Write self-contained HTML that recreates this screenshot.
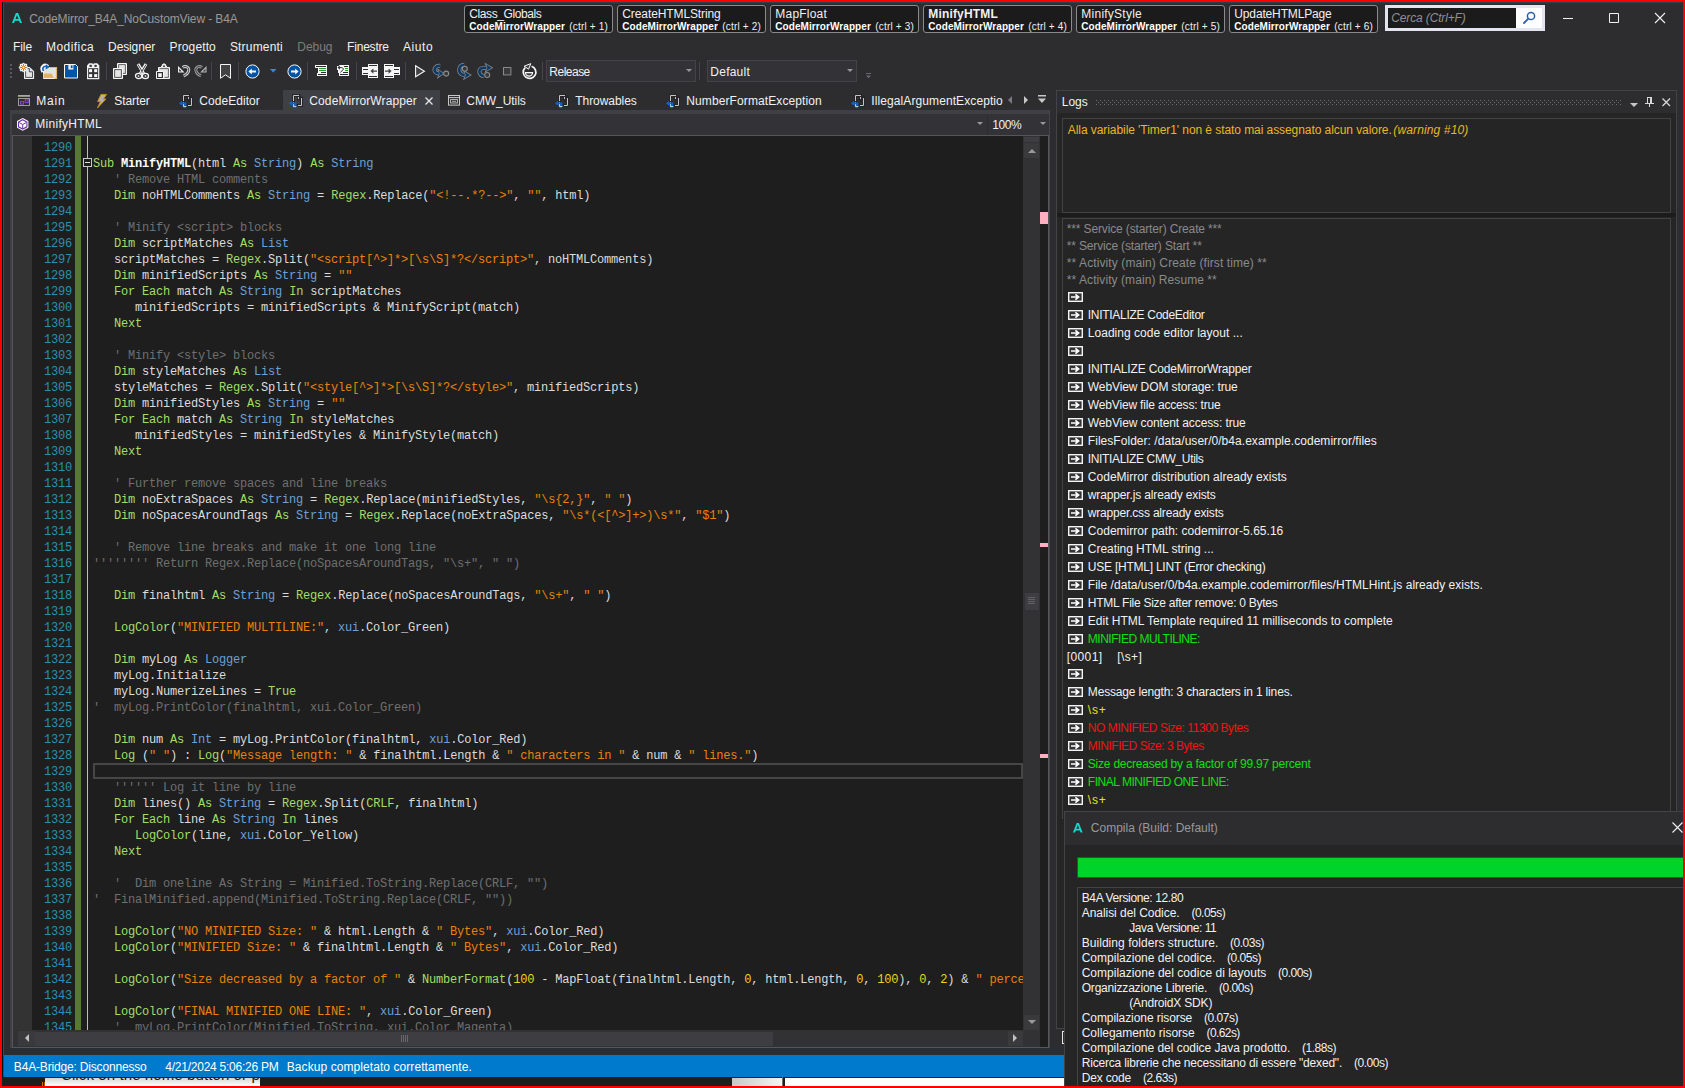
<!DOCTYPE html>
<html><head><meta charset="utf-8"><title>B4A</title>
<style>
html,body{margin:0;padding:0;}
body{width:1685px;height:1088px;background:#2d2d30;overflow:hidden;position:relative;font-family:'Liberation Sans', sans-serif;}
svg{position:absolute;overflow:visible}

.code{position:absolute;white-space:pre;font:12px/16px "Liberation Mono", monospace;letter-spacing:-0.2px;color:#dcdcdc;height:16px}
.k{color:#a3de68}.t{color:#6ba1d8}.s{color:#e8820c}.c{color:#6f6f6f}.n{color:#f0d020}.b{color:#ffffff;font-weight:bold}
.ln{position:absolute;white-space:pre;font:12px/16px "Liberation Mono", monospace;letter-spacing:-0.2px;color:#2b91af;width:40px;text-align:right;height:16px}

</style></head><body>
<div style="position:absolute;left:0px;top:0px;width:1685px;height:1088px;background:#ff0000;"></div>
<div style="position:absolute;left:2px;top:2px;width:1681px;height:1084px;background:#2d2d30;"></div>
<div style="position:absolute;left:2px;top:2px;width:1px;height:1084px;background:#06121a;"></div>
<div style="position:absolute;left:3px;top:2px;width:1px;height:1084px;background:#464648;"></div>
<div style="position:absolute;left:3px;top:2px;width:1679px;height:1px;background:#2c4048;"></div>
<div style="position:absolute;left:3px;top:3px;width:1679px;height:1px;background:#2d3436;"></div>
<div style="position:absolute;left:2px;top:1077px;width:1063px;height:9px;background:#1e1e1e;"></div>
<div style="position:absolute;left:45px;top:1078px;width:215px;height:8px;background:linear-gradient(#d6d6d6,#ffffff);"></div>
<div style="position:absolute;left:41.5px;top:1082px;width:1.5px;height:3.5px;background:#c87010;"></div>
<div style="position:absolute;left:43.5px;top:1082px;width:1px;height:3.5px;background:#a86010;"></div>
<div style="position:absolute;left:732px;top:1078px;width:50px;height:8px;background:linear-gradient(90deg,#c8c8c8,#f4f4f4);"></div>
<div style="position:absolute;left:785px;top:1078px;width:279px;height:8px;background:#ffffff;"></div>
<div style="position:absolute;left:782px;top:1077px;width:1px;height:9px;background:#707070;"></div>
<div style="position:absolute;left:45px;top:1078px;width:215px;height:8px;overflow:hidden"><div style="position:absolute;left:16px;top:-11.5px;font:15px/16px 'Liberation Sans', sans-serif;color:#1a1a1a;white-space:pre;letter-spacing:0.1px">Click on the home button or pov</div></div>
<div style="position:absolute;left:4px;top:1055px;width:1060px;height:22px;background:#007acc;"></div>
<div style="position:absolute;left:13.80px;top:1059.34px;font:normal 12px/17px 'Liberation Sans', sans-serif;color:#ffffff;white-space:pre;letter-spacing:-0.170px;">B4A-Bridge: Disconnesso</div>
<div style="position:absolute;left:165.30px;top:1059.34px;font:normal 12px/17px 'Liberation Sans', sans-serif;color:#ffffff;white-space:pre;letter-spacing:-0.242px;">4/21/2024 5:06:26 PM</div>
<div style="position:absolute;left:286.80px;top:1059.34px;font:normal 12px/17px 'Liberation Sans', sans-serif;color:#ffffff;white-space:pre;letter-spacing:0.072px;">Backup completato correttamente.</div>
<div style="position:absolute;left:10px;top:110px;width:1040px;height:4px;background:#3f3f46;"></div>
<div style="position:absolute;left:10px;top:110px;width:2px;height:938px;background:#3f3f46;"></div>
<div style="position:absolute;left:283px;top:90px;width:157px;height:20px;background:#3f3f46;"></div>
<div style="position:absolute;left:12px;top:114px;width:1037px;height:21px;background:#333337;"></div>
<div style="position:absolute;left:987px;top:114px;width:1px;height:21px;background:#2d2d30;"></div>
<div style="position:absolute;left:1049px;top:110px;width:1px;height:938px;background:#46464a;"></div>
<div style="position:absolute;left:12px;top:135px;width:1037px;height:913px;background:#56565a;"></div>
<div style="position:absolute;left:13px;top:136px;width:1035px;height:911px;background:#1e1e1e;"></div>
<div style="position:absolute;left:13px;top:136px;width:19px;height:894px;background:#333333;"></div>
<div style="position:absolute;left:75px;top:136px;width:6px;height:894px;background:#577a2f;"></div>
<div style="position:absolute;left:87px;top:136px;width:1px;height:894px;background:#bdbdbd;"></div>
<div style="position:absolute;left:1023px;top:136px;width:17px;height:894px;background:#323235;"></div>
<div style="position:absolute;left:1024px;top:137px;width:15px;height:5px;background:#3e3e42;"></div>
<div style="position:absolute;left:1024px;top:143px;width:15px;height:15px;background:#3a3a3d;"></div>
<div style="position:absolute;left:1024px;top:1015px;width:15px;height:15px;background:#3a3a3d;"></div>
<div style="position:absolute;left:1024.5px;top:592.5px;width:14px;height:17px;background:#3e3e42;"></div>
<div style="position:absolute;left:1040px;top:136px;width:8px;height:894px;background:#1e1e1e;"></div>
<div style="position:absolute;left:1040px;top:212px;width:8px;height:12px;background:#ffb0c0;"></div>
<div style="position:absolute;left:1040px;top:543px;width:8px;height:4px;background:#ffb0c0;"></div>
<div style="position:absolute;left:1040px;top:754px;width:8px;height:4px;background:#ffb0c0;"></div>
<div style="position:absolute;left:13px;top:1030px;width:1027px;height:17px;background:#323235;"></div>
<div style="position:absolute;left:18px;top:1031px;width:17px;height:15px;background:#3a3a3d;"></div>
<div style="position:absolute;left:35px;top:1031.5px;width:738px;height:14px;background:#3e3e42;"></div>
<div style="position:absolute;left:1007.5px;top:1031px;width:15px;height:15px;background:#3a3a3d;"></div>
<div style="position:absolute;left:1040px;top:1030px;width:8px;height:17px;background:#1e1e1e;"></div>
<div style="position:absolute;left:93px;top:763px;width:930px;height:16px;background:#464646;"></div>
<div style="position:absolute;left:95px;top:765px;width:926px;height:12px;background:#1e1e1e;"></div>
<div style="position:absolute;left:93px;top:136px;width:930px;height:894px;overflow:hidden">
<div class="code" style="left:0;top:20px"><span class="k">Sub</span> <span class="b">MinifyHTML</span>(html <span class="k">As</span> <span class="t">String</span>) <span class="k">As</span> <span class="t">String</span></div>
<div class="code" style="left:0;top:36px">   <span class="c">' Remove HTML comments</span></div>
<div class="code" style="left:0;top:52px">   <span class="k">Dim</span> noHTMLComments <span class="k">As</span> <span class="t">String</span> = <span class="k">Regex</span>.Replace(<span class="s">"&lt;!--.*?--&gt;"</span>, <span class="s">""</span>, html)</div>
<div class="code" style="left:0;top:84px">   <span class="c">' Minify &lt;script&gt; blocks</span></div>
<div class="code" style="left:0;top:100px">   <span class="k">Dim</span> scriptMatches <span class="k">As</span> <span class="t">List</span></div>
<div class="code" style="left:0;top:116px">   scriptMatches = <span class="k">Regex</span>.Split(<span class="s">"&lt;script[^&gt;]*&gt;[\s\S]*?&lt;/script&gt;"</span>, noHTMLComments)</div>
<div class="code" style="left:0;top:132px">   <span class="k">Dim</span> minifiedScripts <span class="k">As</span> <span class="t">String</span> = <span class="s">""</span></div>
<div class="code" style="left:0;top:148px">   <span class="k">For</span> <span class="k">Each</span> match <span class="k">As</span> <span class="t">String</span> <span class="k">In</span> scriptMatches</div>
<div class="code" style="left:0;top:164px">      minifiedScripts = minifiedScripts &amp; MinifyScript(match)</div>
<div class="code" style="left:0;top:180px">   <span class="k">Next</span></div>
<div class="code" style="left:0;top:212px">   <span class="c">' Minify &lt;style&gt; blocks</span></div>
<div class="code" style="left:0;top:228px">   <span class="k">Dim</span> styleMatches <span class="k">As</span> <span class="t">List</span></div>
<div class="code" style="left:0;top:244px">   styleMatches = <span class="k">Regex</span>.Split(<span class="s">"&lt;style[^&gt;]*&gt;[\s\S]*?&lt;/style&gt;"</span>, minifiedScripts)</div>
<div class="code" style="left:0;top:260px">   <span class="k">Dim</span> minifiedStyles <span class="k">As</span> <span class="t">String</span> = <span class="s">""</span></div>
<div class="code" style="left:0;top:276px">   <span class="k">For</span> <span class="k">Each</span> match <span class="k">As</span> <span class="t">String</span> <span class="k">In</span> styleMatches</div>
<div class="code" style="left:0;top:292px">      minifiedStyles = minifiedStyles &amp; MinifyStyle(match)</div>
<div class="code" style="left:0;top:308px">   <span class="k">Next</span></div>
<div class="code" style="left:0;top:340px">   <span class="c">' Further remove spaces and line breaks</span></div>
<div class="code" style="left:0;top:356px">   <span class="k">Dim</span> noExtraSpaces <span class="k">As</span> <span class="t">String</span> = <span class="k">Regex</span>.Replace(minifiedStyles, <span class="s">"\s{2,}"</span>, <span class="s">" "</span>)</div>
<div class="code" style="left:0;top:372px">   <span class="k">Dim</span> noSpacesAroundTags <span class="k">As</span> <span class="t">String</span> = <span class="k">Regex</span>.Replace(noExtraSpaces, <span class="s">"\s*(&lt;[^&gt;]+&gt;)\s*"</span>, <span class="s">"$1"</span>)</div>
<div class="code" style="left:0;top:404px">   <span class="c">' Remove line breaks and make it one long line</span></div>
<div class="code" style="left:0;top:420px"><span class="c">'''''''' Return Regex.Replace(noSpacesAroundTags, "\s+", " ")</span></div>
<div class="code" style="left:0;top:452px">   <span class="k">Dim</span> finalhtml <span class="k">As</span> <span class="t">String</span> = <span class="k">Regex</span>.Replace(noSpacesAroundTags, <span class="s">"\s+"</span>, <span class="s">" "</span>)</div>
<div class="code" style="left:0;top:484px">   <span class="k">LogColor</span>(<span class="s">"MINIFIED MULTILINE:"</span>, <span class="t">xui</span>.Color_Green)</div>
<div class="code" style="left:0;top:516px">   <span class="k">Dim</span> myLog <span class="k">As</span> <span class="t">Logger</span></div>
<div class="code" style="left:0;top:532px">   myLog.Initialize</div>
<div class="code" style="left:0;top:548px">   myLog.NumerizeLines = <span class="k">True</span></div>
<div class="code" style="left:0;top:564px"><span class="c">'  myLog.PrintColor(finalhtml, xui.Color_Green)</span></div>
<div class="code" style="left:0;top:596px">   <span class="k">Dim</span> num <span class="k">As</span> <span class="t">Int</span> = myLog.PrintColor(finalhtml, <span class="t">xui</span>.Color_Red)</div>
<div class="code" style="left:0;top:612px">   <span class="k">Log</span> (<span class="s">" "</span>) : <span class="k">Log</span>(<span class="s">"Message length: "</span> &amp; finalhtml.Length &amp; <span class="s">" characters in "</span> &amp; num &amp; <span class="s">" lines."</span>)</div>
<div class="code" style="left:0;top:644px">   <span class="c">'''''' Log it line by line</span></div>
<div class="code" style="left:0;top:660px">   <span class="k">Dim</span> lines() <span class="k">As</span> <span class="t">String</span> = <span class="k">Regex</span>.Split(<span class="k">CRLF</span>, finalhtml)</div>
<div class="code" style="left:0;top:676px">   <span class="k">For</span> <span class="k">Each</span> line <span class="k">As</span> <span class="t">String</span> <span class="k">In</span> lines</div>
<div class="code" style="left:0;top:692px">      <span class="k">LogColor</span>(line, <span class="t">xui</span>.Color_Yellow)</div>
<div class="code" style="left:0;top:708px">   <span class="k">Next</span></div>
<div class="code" style="left:0;top:740px">   <span class="c">'  Dim oneline As String = Minified.ToString.Replace(CRLF, "")</span></div>
<div class="code" style="left:0;top:756px"><span class="c">'  FinalMinified.append(Minified.ToString.Replace(CRLF, ""))</span></div>
<div class="code" style="left:0;top:788px">   <span class="k">LogColor</span>(<span class="s">"NO MINIFIED Size: "</span> &amp; html.Length &amp; <span class="s">" Bytes"</span>, <span class="t">xui</span>.Color_Red)</div>
<div class="code" style="left:0;top:804px">   <span class="k">LogColor</span>(<span class="s">"MINIFIED Size: "</span> &amp; finalhtml.Length &amp; <span class="s">" Bytes"</span>, <span class="t">xui</span>.Color_Red)</div>
<div class="code" style="left:0;top:836px">   <span class="k">LogColor</span>(<span class="s">"Size decreased by a factor of "</span> &amp; <span class="k">NumberFormat</span>(<span class="n">100</span> - MapFloat(finalhtml.Length, <span class="n">0</span>, html.Length, <span class="n">0</span>, <span class="n">100</span>), <span class="n">0</span>, <span class="n">2</span>) &amp; <span class="s">" percent"</span>)</div>
<div class="code" style="left:0;top:868px">   <span class="k">LogColor</span>(<span class="s">"FINAL MINIFIED ONE LINE: "</span>, <span class="t">xui</span>.Color_Green)</div>
<div class="code" style="left:0;top:884px">   <span class="c">'  myLog.PrintColor(Minified.ToString, xui.Color_Magenta)</span></div>
</div>
<div style="position:absolute;left:13px;top:136px;width:70px;height:894px;overflow:hidden">
<div class="ln" style="left:19px;top:4px">1290</div>
<div class="ln" style="left:19px;top:20px">1291</div>
<div class="ln" style="left:19px;top:36px">1292</div>
<div class="ln" style="left:19px;top:52px">1293</div>
<div class="ln" style="left:19px;top:68px">1294</div>
<div class="ln" style="left:19px;top:84px">1295</div>
<div class="ln" style="left:19px;top:100px">1296</div>
<div class="ln" style="left:19px;top:116px">1297</div>
<div class="ln" style="left:19px;top:132px">1298</div>
<div class="ln" style="left:19px;top:148px">1299</div>
<div class="ln" style="left:19px;top:164px">1300</div>
<div class="ln" style="left:19px;top:180px">1301</div>
<div class="ln" style="left:19px;top:196px">1302</div>
<div class="ln" style="left:19px;top:212px">1303</div>
<div class="ln" style="left:19px;top:228px">1304</div>
<div class="ln" style="left:19px;top:244px">1305</div>
<div class="ln" style="left:19px;top:260px">1306</div>
<div class="ln" style="left:19px;top:276px">1307</div>
<div class="ln" style="left:19px;top:292px">1308</div>
<div class="ln" style="left:19px;top:308px">1309</div>
<div class="ln" style="left:19px;top:324px">1310</div>
<div class="ln" style="left:19px;top:340px">1311</div>
<div class="ln" style="left:19px;top:356px">1312</div>
<div class="ln" style="left:19px;top:372px">1313</div>
<div class="ln" style="left:19px;top:388px">1314</div>
<div class="ln" style="left:19px;top:404px">1315</div>
<div class="ln" style="left:19px;top:420px">1316</div>
<div class="ln" style="left:19px;top:436px">1317</div>
<div class="ln" style="left:19px;top:452px">1318</div>
<div class="ln" style="left:19px;top:468px">1319</div>
<div class="ln" style="left:19px;top:484px">1320</div>
<div class="ln" style="left:19px;top:500px">1321</div>
<div class="ln" style="left:19px;top:516px">1322</div>
<div class="ln" style="left:19px;top:532px">1323</div>
<div class="ln" style="left:19px;top:548px">1324</div>
<div class="ln" style="left:19px;top:564px">1325</div>
<div class="ln" style="left:19px;top:580px">1326</div>
<div class="ln" style="left:19px;top:596px">1327</div>
<div class="ln" style="left:19px;top:612px">1328</div>
<div class="ln" style="left:19px;top:628px">1329</div>
<div class="ln" style="left:19px;top:644px">1330</div>
<div class="ln" style="left:19px;top:660px">1331</div>
<div class="ln" style="left:19px;top:676px">1332</div>
<div class="ln" style="left:19px;top:692px">1333</div>
<div class="ln" style="left:19px;top:708px">1334</div>
<div class="ln" style="left:19px;top:724px">1335</div>
<div class="ln" style="left:19px;top:740px">1336</div>
<div class="ln" style="left:19px;top:756px">1337</div>
<div class="ln" style="left:19px;top:772px">1338</div>
<div class="ln" style="left:19px;top:788px">1339</div>
<div class="ln" style="left:19px;top:804px">1340</div>
<div class="ln" style="left:19px;top:820px">1341</div>
<div class="ln" style="left:19px;top:836px">1342</div>
<div class="ln" style="left:19px;top:852px">1343</div>
<div class="ln" style="left:19px;top:868px">1344</div>
<div class="ln" style="left:19px;top:884px">1345</div>
</div>
<div style="position:absolute;left:83px;top:158px;width:9px;height:9px;background:#c8c8c8;"></div>
<div style="position:absolute;left:84px;top:159px;width:7px;height:7px;background:#1e1e1e;"></div>
<div style="position:absolute;left:85px;top:162px;width:5px;height:1px;background:#e0e0e0;"></div>
<svg style="left:12px;top:13px" width="10" height="10" viewBox="0 0 10 10"><path d="M0 10 L3.9 0 L6.1 0 L10 10 L7.9 10 L7.1 7.7 L2.9 7.7 L2.1 10 Z M3.5 6 L6.5 6 L5 1.9 Z" fill="#12dcd0" fill-rule="evenodd"/></svg>
<div style="position:absolute;left:29.30px;top:11.34px;font:normal 12px/17px 'Liberation Sans', sans-serif;color:#999999;white-space:pre;letter-spacing:-0.105px;">CodeMirror_B4A_NoCustomView - B4A</div>
<div style="position:absolute;left:464px;top:5px;width:147px;height:26px;border:1px solid #8a8a8a;border-radius:3px;background:#1b1b1c"></div>
<div style="position:absolute;left:469.30px;top:5.94px;font:normal 12px/17px 'Liberation Sans', sans-serif;color:#f1f1f1;white-space:pre;letter-spacing:-0.406px;">Class_Globals</div>
<div style="position:absolute;left:469.30px;top:20.34px;font:bold 10px/14px 'Liberation Sans', sans-serif;color:#ffffff;white-space:pre;letter-spacing:0.076px;">CodeMirrorWrapper</div>
<div style="position:absolute;left:569.30px;top:20.34px;font:normal 10px/14px 'Liberation Sans', sans-serif;color:#f1f1f1;white-space:pre;letter-spacing:0.172px;">(ctrl + 1)</div>
<div style="position:absolute;left:617px;top:5px;width:147px;height:26px;border:1px solid #8a8a8a;border-radius:3px;background:#1b1b1c"></div>
<div style="position:absolute;left:622.30px;top:5.94px;font:normal 12px/17px 'Liberation Sans', sans-serif;color:#f1f1f1;white-space:pre;letter-spacing:-0.102px;">CreateHTMLString</div>
<div style="position:absolute;left:622.30px;top:20.34px;font:bold 10px/14px 'Liberation Sans', sans-serif;color:#ffffff;white-space:pre;letter-spacing:0.076px;">CodeMirrorWrapper</div>
<div style="position:absolute;left:722.30px;top:20.34px;font:normal 10px/14px 'Liberation Sans', sans-serif;color:#f1f1f1;white-space:pre;letter-spacing:0.172px;">(ctrl + 2)</div>
<div style="position:absolute;left:770px;top:5px;width:147px;height:26px;border:1px solid #8a8a8a;border-radius:3px;background:#1b1b1c"></div>
<div style="position:absolute;left:775.30px;top:5.94px;font:normal 12px/17px 'Liberation Sans', sans-serif;color:#f1f1f1;white-space:pre;letter-spacing:0.210px;">MapFloat</div>
<div style="position:absolute;left:775.30px;top:20.34px;font:bold 10px/14px 'Liberation Sans', sans-serif;color:#ffffff;white-space:pre;letter-spacing:0.076px;">CodeMirrorWrapper</div>
<div style="position:absolute;left:875.30px;top:20.34px;font:normal 10px/14px 'Liberation Sans', sans-serif;color:#f1f1f1;white-space:pre;letter-spacing:0.172px;">(ctrl + 3)</div>
<div style="position:absolute;left:923px;top:5px;width:147px;height:26px;border:1px solid #8a8a8a;border-radius:3px;background:#1b1b1c"></div>
<div style="position:absolute;left:928.30px;top:5.94px;font:bold 12px/17px 'Liberation Sans', sans-serif;color:#f1f1f1;white-space:pre;letter-spacing:0.167px;">MinifyHTML</div>
<div style="position:absolute;left:928.30px;top:20.34px;font:bold 10px/14px 'Liberation Sans', sans-serif;color:#ffffff;white-space:pre;letter-spacing:0.076px;">CodeMirrorWrapper</div>
<div style="position:absolute;left:1028.30px;top:20.34px;font:normal 10px/14px 'Liberation Sans', sans-serif;color:#f1f1f1;white-space:pre;letter-spacing:0.172px;">(ctrl + 4)</div>
<div style="position:absolute;left:1076px;top:5px;width:147px;height:26px;border:1px solid #8a8a8a;border-radius:3px;background:#1b1b1c"></div>
<div style="position:absolute;left:1081.30px;top:5.94px;font:normal 12px/17px 'Liberation Sans', sans-serif;color:#f1f1f1;white-space:pre;letter-spacing:0.248px;">MinifyStyle</div>
<div style="position:absolute;left:1081.30px;top:20.34px;font:bold 10px/14px 'Liberation Sans', sans-serif;color:#ffffff;white-space:pre;letter-spacing:0.076px;">CodeMirrorWrapper</div>
<div style="position:absolute;left:1181.30px;top:20.34px;font:normal 10px/14px 'Liberation Sans', sans-serif;color:#f1f1f1;white-space:pre;letter-spacing:0.172px;">(ctrl + 5)</div>
<div style="position:absolute;left:1229px;top:5px;width:147px;height:26px;border:1px solid #8a8a8a;border-radius:3px;background:#1b1b1c"></div>
<div style="position:absolute;left:1234.30px;top:5.94px;font:normal 12px/17px 'Liberation Sans', sans-serif;color:#f1f1f1;white-space:pre;letter-spacing:-0.145px;">UpdateHTMLPage</div>
<div style="position:absolute;left:1234.30px;top:20.34px;font:bold 10px/14px 'Liberation Sans', sans-serif;color:#ffffff;white-space:pre;letter-spacing:0.076px;">CodeMirrorWrapper</div>
<div style="position:absolute;left:1334.30px;top:20.34px;font:normal 10px/14px 'Liberation Sans', sans-serif;color:#f1f1f1;white-space:pre;letter-spacing:0.172px;">(ctrl + 6)</div>
<div style="position:absolute;left:1385px;top:5px;width:160px;height:26px;background:#e4e4ee;"></div>
<div style="position:absolute;left:1388px;top:8px;width:128px;height:20px;background:#1b1b1c;"></div>
<div style="position:absolute;left:1516px;top:8px;width:26px;height:20px;background:#fdfdfd;"></div>
<div style="position:absolute;left:1391.30px;top:10.34px;font:italic normal 12px/17px 'Liberation Sans', sans-serif;color:#8f8f8f;white-space:pre;letter-spacing:-0.142px;">Cerca (Ctrl+F)</div>
<svg style="left:1521px;top:10px" width="16" height="16" viewBox="0 0 16 16"><circle cx="10" cy="6" r="3.6" fill="none" stroke="#2d5fa8" stroke-width="1.5"/><path d="M7.3 8.7 L3 13" stroke="#2d5fa8" stroke-width="1.8" stroke-linecap="round"/></svg>
<svg style="left:1560px;top:8px" width="120" height="22" viewBox="0 0 120 22"><path d="M3 10.5 H13" stroke="#f1f1f1" stroke-width="1"/><path d="M49.5 5.5 H58.5 V14.5 H49.5 Z" fill="none" stroke="#f1f1f1" stroke-width="1"/><path d="M95 5 L105 15 M105 5 L95 15" stroke="#f1f1f1" stroke-width="1.1"/></svg>
<div style="position:absolute;left:12.90px;top:39.34px;font:normal 12px/17px 'Liberation Sans', sans-serif;color:#f1f1f1;white-space:pre;letter-spacing:-0.048px;">File</div>
<div style="position:absolute;left:46.10px;top:39.34px;font:normal 12px/17px 'Liberation Sans', sans-serif;color:#f1f1f1;white-space:pre;letter-spacing:0.430px;">Modifica</div>
<div style="position:absolute;left:108.10px;top:39.34px;font:normal 12px/17px 'Liberation Sans', sans-serif;color:#f1f1f1;white-space:pre;letter-spacing:-0.119px;">Designer</div>
<div style="position:absolute;left:169.60px;top:39.34px;font:normal 12px/17px 'Liberation Sans', sans-serif;color:#f1f1f1;white-space:pre;letter-spacing:0.118px;">Progetto</div>
<div style="position:absolute;left:229.90px;top:39.34px;font:normal 12px/17px 'Liberation Sans', sans-serif;color:#f1f1f1;white-space:pre;letter-spacing:0.193px;">Strumenti</div>
<div style="position:absolute;left:297.30px;top:39.34px;font:normal 12px/17px 'Liberation Sans', sans-serif;color:#7d7d7d;white-space:pre;letter-spacing:-0.044px;">Debug</div>
<div style="position:absolute;left:347.10px;top:39.34px;font:normal 12px/17px 'Liberation Sans', sans-serif;color:#f1f1f1;white-space:pre;letter-spacing:-0.208px;">Finestre</div>
<div style="position:absolute;left:402.90px;top:39.34px;font:normal 12px/17px 'Liberation Sans', sans-serif;color:#f1f1f1;white-space:pre;letter-spacing:0.610px;">Aiuto</div>
<div style="position:absolute;left:10px;top:64px;width:2px;height:2px;background:#5a5a5e;"></div>
<div style="position:absolute;left:10px;top:68px;width:2px;height:2px;background:#5a5a5e;"></div>
<div style="position:absolute;left:10px;top:72px;width:2px;height:2px;background:#5a5a5e;"></div>
<div style="position:absolute;left:10px;top:76px;width:2px;height:2px;background:#5a5a5e;"></div>
<svg style="left:19px;top:63px" width="16" height="16" viewBox="0 0 16 16"><path d="M5.5 4.5 H10.8 L14.6 8.3 V15.5 H5.5 Z" fill="#e4e4e4" stroke="#f6f6f6" stroke-width="1"/>
<path d="M6.6 5.6 H10.3 V8.8 H13.5 V14.4 H6.6 Z" fill="#e4e4e4" stroke="#2d2d30" stroke-width="0.8"/>
<g stroke="#f6f6f6" stroke-width="2.6" stroke-linecap="round"><path d="M4.5 1 V8 M1 4.5 H8 M2 2 L7 7 M7 2 L2 7"/></g>
<g stroke="#d67a10" stroke-width="1"><path d="M4.5 0.8 V8.2 M0.8 4.5 H8.2 M1.9 1.9 L7.1 7.1 M7.1 1.9 L1.9 7.1"/></g><circle cx="4.5" cy="4.5" r="1" fill="#f6f6f6"/></svg>
<svg style="left:41px;top:63px" width="16" height="16" viewBox="0 0 16 16"><path d="M2.5 4.5 H15.5 V15.5 H2.5 Z" fill="#e4e4e4" stroke="#f6f6f6" stroke-width="1"/>
<path d="M9 4.5 H15.5 V15.5 H13.5" fill="none" stroke="#e3b266" stroke-width="1.2"/>
<path d="M2.5 10.5 H10.5 L13 15 H2.5 Z" fill="#e3b266"/>
<path d="M2 9 C-1 3 4 1 7 3.5" fill="none" stroke="#f6f6f6" stroke-width="3.4"/>
<path d="M2.4 8 C0.5 4 4 2.3 6.5 4" fill="none" stroke="#1464c0" stroke-width="1.6"/>
<path d="M5 1.2 L8.6 4.2 L4.6 6.4 Z" fill="#1464c0"/></svg>
<svg style="left:64px;top:64px" width="14" height="15" viewBox="0 0 14 15"><path d="M0.5 0.5 H11.5 L13.5 2.5 V14 H0.5 Z" fill="#0054a6" stroke="#f6f6f6" stroke-width="1"/>
<path d="M4.3 0.8 H9.4 V5.6 H4.3 Z" fill="#e4e4e4"/><rect x="6.9" y="1.4" width="1.6" height="2.6" fill="#0054a6"/></svg>
<svg style="left:87px;top:63px" width="13" height="17" viewBox="0 0 13 17"><path d="M0 2.6 L2 0.3 H5.3 L6.15 1.2 L7 0.3 H10.3 L12.3 2.6 V16.2 H0 Z" fill="#f0f0f0"/>
<ellipse cx="3.7" cy="2.9" rx="1.4" ry="1.1" fill="#38383a"/><ellipse cx="8.6" cy="2.9" rx="1.4" ry="1.1" fill="#38383a"/>
<rect x="1.2" y="5.2" width="9.9" height="9.8" fill="#333336"/>
<g fill="#fbfbfb"><rect x="2.1" y="6.2" width="3" height="3"/><rect x="7.2" y="6.2" width="3" height="3"/><rect x="2.1" y="11.1" width="3" height="3"/><rect x="7.2" y="11.1" width="3" height="3"/></g></svg>
<div style="position:absolute;left:106px;top:62px;width:1px;height:18px;background:#46464a;"></div>
<svg style="left:113px;top:63px" width="16" height="16" viewBox="0 0 16 16"><path d="M4.5 0.5 H13.5 V11.5 H4.5 Z" fill="#e4e4e4" stroke="#f6f6f6" stroke-width="1"/><path d="M5.6 1.6 H12.4 V10.4 H5.6 Z" fill="none" stroke="#2d2d30" stroke-width="0.7"/>
<path d="M0.5 5.5 H9.5 V15.5 H0.5 Z" fill="#e4e4e4" stroke="#f6f6f6" stroke-width="1"/><path d="M1.6 6.6 H8.4 V14.4 H1.6 Z" fill="#e4e4e4" stroke="#2d2d30" stroke-width="0.8"/></svg>
<svg style="left:135px;top:63px" width="14" height="16" viewBox="0 0 14 16"><g fill="none" stroke="#f6f6f6" stroke-width="3"><path d="M3 1 L9.5 12 M11 1 L4.5 12"/></g>
<g fill="none" stroke="#2d2d30" stroke-width="0.9"><path d="M3 1.5 L9.3 12 M11 1.5 L4.7 12"/></g>
<ellipse cx="3.6" cy="13" rx="3.1" ry="2.6" fill="#2d2d30" stroke="#f6f6f6" stroke-width="1.3"/><ellipse cx="10.4" cy="13" rx="3.1" ry="2.6" fill="#2d2d30" stroke="#f6f6f6" stroke-width="1.3"/>
<rect x="2.8" y="12.3" width="1.5" height="1.5" fill="#f6f6f6"/><rect x="9.7" y="12.3" width="1.5" height="1.5" fill="#f6f6f6"/><rect x="6.4" y="8.6" width="1.2" height="1.2" fill="#f6f6f6"/></svg>
<svg style="left:156px;top:63px" width="14" height="16" viewBox="0 0 14 16"><path d="M2.5 4.5 H5 L7 1 H9 L11 4.5 H13.5 V15.5 H2.5 Z" fill="#e4e4e4" stroke="#f6f6f6" stroke-width="1"/>
<circle cx="8" cy="3.2" r="0.9" fill="#2d2d30"/>
<path d="M0.5 8.5 H7.5 V15.5 H0.5 Z" fill="#2d2d30" stroke="#f6f6f6" stroke-width="1"/><rect x="2.2" y="10.2" width="3.6" height="3.8" fill="#f6f6f6"/>
<path d="M3.5 5.6 H12.4 V14.4 H8.5" fill="none" stroke="#2d2d30" stroke-width="0.7"/></svg>
<svg style="left:177.6px;top:64.6px" width="12" height="12" viewBox="0 0 12 12"><g ><path d="M4.6 2.4 C8 0 12 2.8 10.4 6.6 C9.6 8.6 7.8 10 5.6 10.8" fill="none" stroke="#d4d4d4" stroke-width="2.9"/>
<path d="M4.6 2.4 C8 0 12 2.8 10.4 6.6 C9.6 8.6 7.8 10 5.6 10.8" fill="none" stroke="#2d2d30" stroke-width="0.9"/>
<path d="M0.6 2.4 V7 H5.2 Z" fill="#3a3a3c" stroke="#f0f0f0" stroke-width="1.1" stroke-linejoin="miter"/></g></svg>
<svg style="left:195.2px;top:64.6px" width="12" height="12" viewBox="0 0 12 12"><g transform="translate(11.6,0) scale(-1,1)"><path d="M4.6 2.4 C8 0 12 2.8 10.4 6.6 C9.6 8.6 7.8 10 5.6 10.8" fill="none" stroke="#9c9c9c" stroke-width="2.9"/>
<path d="M4.6 2.4 C8 0 12 2.8 10.4 6.6 C9.6 8.6 7.8 10 5.6 10.8" fill="none" stroke="#2d2d30" stroke-width="0.9"/>
<path d="M0.6 2.4 V7 H5.2 Z" fill="#3a3a3c" stroke="#b4b4b4" stroke-width="1.1" stroke-linejoin="miter"/></g></svg>
<div style="position:absolute;left:211px;top:62px;width:1px;height:18px;background:#46464a;"></div>
<svg style="left:220px;top:64px" width="11" height="15" viewBox="0 0 11 15"><path d="M0.5 0.5 H10.5 V14.3 L5.5 10.8 L0.5 14.3 Z" fill="#424245" stroke="#f6f6f6" stroke-width="1"/></svg>
<div style="position:absolute;left:238px;top:62px;width:1px;height:18px;background:#46464a;"></div>
<svg style="left:244.5px;top:63.5px" width="15" height="15" viewBox="0 0 15 15"><circle cx="7.5" cy="7.5" r="6.6" fill="#0054a6" stroke="#f6f6f6" stroke-width="1"/><g ><path d="M3.4 7.5 L6.8 4.4 V6.6 H11 V8.4 H6.8 V10.6 Z" fill="#f6f6f6"/></g></svg>
<svg style="left:270px;top:69px" width="7" height="4" viewBox="0 0 7 4"><path d="M0 0 H6.4 L3.2 3.4 Z" fill="#4a86d0"/></svg>
<svg style="left:286.5px;top:63.5px" width="15" height="15" viewBox="0 0 15 15"><circle cx="7.5" cy="7.5" r="6.6" fill="#0054a6" stroke="#f6f6f6" stroke-width="1"/><g transform="translate(15,0) scale(-1,1)"><path d="M3.4 7.5 L6.8 4.4 V6.6 H11 V8.4 H6.8 V10.6 Z" fill="#f6f6f6"/></g></svg>
<div style="position:absolute;left:307px;top:62px;width:1px;height:18px;background:#46464a;"></div>
<svg style="left:315px;top:65px" width="12" height="11" viewBox="0 0 12 11"><path d="M0 0 H12 V11 H2 V8 H3 V3 H0 Z" fill="#f6f6f6"/>
<g fill="#2d2d30" shape-rendering="crispEdges"><rect x="1" y="1" width="10" height="1"/><rect x="6" y="7" width="5" height="1"/><rect x="3" y="9" width="8" height="1"/></g>
<g fill="#2f9a2f" shape-rendering="crispEdges"><rect x="4" y="3" width="7" height="1"/><rect x="4" y="5" width="7" height="1"/></g></svg>
<svg style="left:337px;top:65px" width="12" height="11" viewBox="0 0 12 11"><path d="M0 1 H2 V0 H12 V11 H2 V8 H1 V5 H0 Z" fill="#f6f6f6"/>
<g fill="#2d2d30" shape-rendering="crispEdges"><rect x="7" y="1" width="4" height="1"/><rect x="6" y="7" width="5" height="1"/><rect x="3" y="9" width="8" height="1"/></g>
<g fill="#2f9a2f" shape-rendering="crispEdges"><rect x="8" y="3" width="3" height="1"/><rect x="8" y="5" width="3" height="1"/></g>
<path d="M2 2.6 H4.4 C6.8 2.6 6.8 5 5 5.8 L3.4 7.4" fill="none" stroke="#2d2d30" stroke-width="1"/><path d="M2.8 0.4 L0.6 2.6 L2.8 4.8 Z" fill="#2d2d30"/></svg>
<div style="position:absolute;left:356px;top:62px;width:1px;height:18px;background:#46464a;"></div>
<svg style="left:362px;top:64px" width="16" height="14" viewBox="0 0 16 14"><g ><path d="M6 0 H16 V14 H6 V11 H0 V3 H6 Z" fill="#f6f6f6"/>
<g fill="#2d2d30" shape-rendering="crispEdges"><rect x="7" y="1" width="8" height="1"/><rect x="7" y="12" width="8" height="1"/><rect x="1" y="5" width="5" height="1"/><rect x="1" y="9" width="5" height="1"/></g>
<path d="M8.4 7.1 L11.4 4.4 V6.4 H15 V7.8 H11.4 V9.8 Z" fill="#424245"/></g></svg>
<svg style="left:384px;top:64px" width="16" height="14" viewBox="0 0 16 14"><g transform="translate(16,0) scale(-1,1)"><path d="M6 0 H16 V14 H6 V11 H0 V3 H6 Z" fill="#f6f6f6"/>
<g fill="#2d2d30" shape-rendering="crispEdges"><rect x="7" y="1" width="8" height="1"/><rect x="7" y="12" width="8" height="1"/><rect x="1" y="5" width="5" height="1"/><rect x="1" y="9" width="5" height="1"/></g>
<path d="M8.4 7.1 L11.4 4.4 V6.4 H15 V7.8 H11.4 V9.8 Z" fill="#424245"/></g></svg>
<div style="position:absolute;left:405px;top:62px;width:1px;height:18px;background:#46464a;"></div>
<svg style="left:415px;top:64.5px" width="10" height="13" viewBox="0 0 10 13"><path d="M0.6 0.8 L9.4 6.3 L0.6 11.8 Z" fill="#424245" stroke="#f6f6f6" stroke-width="1.1"/></svg>
<svg style="left:433px;top:63.5px" width="16" height="14" viewBox="0 0 16 14"><path d="M7.2 1.8 C2 1.4 0 6 3 8.6 L5.6 9.6" fill="none" stroke="#8c8c8c" stroke-width="4"/><path d="M5.4 6 L10.2 9.5 L5.4 13 L6.6 9.5 Z" fill="#0c3a66" stroke="#8c8c8c" stroke-width="1.5" stroke-linejoin="miter"/>
<path d="M7.2 1.8 C2 1.4 0 6 3 8.6 L5.6 9.6" fill="none" stroke="#0c3a66" stroke-width="2.6"/><path d="M5.4 6 L10.2 9.5 L5.4 13 L6.6 9.5 Z" fill="#0c3a66"/>
<circle cx="13.2" cy="9.6" r="2.5" fill="#38383a" stroke="#8c8c8c" stroke-width="1.1"/></svg>
<svg style="left:457.5px;top:63px" width="14" height="17" viewBox="0 0 14 17"><path d="M6.2 1.8 C0.6 2 -0.4 9 4 11.4 L6.6 12" fill="none" stroke="#8c8c8c" stroke-width="4"/><path d="M6.4 8.4 L12.4 12 L6.4 15.6 L7.8 12 Z" fill="#0c3a66" stroke="#8c8c8c" stroke-width="1.5" stroke-linejoin="miter"/>
<path d="M6.2 1.8 C0.6 2 -0.4 9 4 11.4 L6.6 12" fill="none" stroke="#0c3a66" stroke-width="2.6"/><path d="M6.4 8.4 L12.4 12 L6.4 15.6 L7.8 12 Z" fill="#0c3a66"/>
<circle cx="6.8" cy="5.8" r="2.5" fill="#38383a" stroke="#8c8c8c" stroke-width="1.1"/></svg>
<svg style="left:478px;top:64px" width="15" height="15" viewBox="0 0 15 15"><path d="M5.8 12.2 C0.4 11 -0.2 4.8 5 3.9 L8.2 3.7" fill="none" stroke="#8c8c8c" stroke-width="4"/><path d="M8 0.3 L13.8 3.7 L8 7.2 L9.4 3.7 Z" fill="#0c3a66" stroke="#8c8c8c" stroke-width="1.5" stroke-linejoin="miter"/>
<path d="M5.8 12.2 C0.4 11 -0.2 4.8 5 3.9 L8.2 3.7" fill="none" stroke="#0c3a66" stroke-width="2.6"/><path d="M8 0.3 L13.8 3.7 L8 7.2 L9.4 3.7 Z" fill="#0c3a66"/>
<circle cx="9.2" cy="11" r="2.5" fill="#38383a" stroke="#8c8c8c" stroke-width="1.1"/></svg>
<svg style="left:503px;top:67px" width="9" height="9" viewBox="0 0 9 9"><rect x="0.5" y="0.5" width="7.4" height="7.4" fill="#3a3a3c" stroke="#8a8a8a" stroke-width="1"/></svg>
<svg style="left:522px;top:63px" width="15" height="17" viewBox="0 0 15 17"><path d="M9.6 3.2 A6.3 6.3 0 1 1 3.2 4.6" fill="none" stroke="#f6f6f6" stroke-width="1.7"/>
<path d="M3.4 9.6 A3.6 3.6 0 0 0 10.6 9.6 Z" fill="#424245" stroke="#f6f6f6" stroke-width="1.2"/>
<path d="M2.2 3.2 L8.8 0.6 L6.6 6.2 Z" fill="#424245" stroke="#f6f6f6" stroke-width="1"/></svg>
<div style="position:absolute;left:542px;top:62px;width:1px;height:18px;background:#46464a;"></div>
<div style="position:absolute;left:546px;top:60px;width:148px;height:20px;border:1px solid #434346;background:#333337"></div>
<div style="position:absolute;left:549.30px;top:64.34px;font:normal 12px/17px 'Liberation Sans', sans-serif;color:#f1f1f1;white-space:pre;letter-spacing:-0.505px;">Release</div>
<svg style="left:685.5px;top:68.5px" width="6" height="3" viewBox="0 0 6 3"><path d="M0 0 H6 L3 3 Z" fill="#999999"/></svg>
<div style="position:absolute;left:699px;top:62px;width:1px;height:18px;background:#46464a;"></div>
<div style="position:absolute;left:707px;top:60px;width:148px;height:20px;border:1px solid #434346;background:#333337"></div>
<div style="position:absolute;left:710.30px;top:64.34px;font:normal 12px/17px 'Liberation Sans', sans-serif;color:#f1f1f1;white-space:pre;letter-spacing:0.245px;">Default</div>
<svg style="left:846.5px;top:68.5px" width="6" height="3" viewBox="0 0 6 3"><path d="M0 0 H6 L3 3 Z" fill="#999999"/></svg>
<svg style="left:865.5px;top:72.5px" width="5" height="6" viewBox="0 0 5 6"><path d="M0 0 H5 V1 H0 Z M0 2.6 H5 L2.5 5.2 Z" fill="#6a6a6e"/></svg>
<svg style="left:18px;top:95px" width="12" height="11" viewBox="0 0 12 11"><rect x="0" y="0" width="12" height="1.8" fill="#a8a8a8"/><rect x="0.5" y="3.5" width="11" height="7" fill="none" stroke="#9a9a9a" stroke-width="1"/>
<rect x="2.5" y="6.5" width="3" height="2.6" fill="none" stroke="#8a3fd8" stroke-width="1.1"/><rect x="7.2" y="4.8" width="3" height="2.8" fill="none" stroke="#8a3fd8" stroke-width="1.1"/></svg>
<div style="position:absolute;left:36.30px;top:93.34px;font:normal 12px/17px 'Liberation Sans', sans-serif;color:#f1f1f1;white-space:pre;letter-spacing:0.828px;">Main</div>
<svg style="left:96px;top:94px" width="12" height="14" viewBox="0 0 12 14"><path d="M5 0.4 L10.6 0.4 L7.4 5 L10 5 L1.4 14 L4.4 7.6 L1.6 7.6 Z" fill="#b4b0a8" stroke="#c8900c" stroke-width="0.9"/></svg>
<div style="position:absolute;left:114.30px;top:93.34px;font:normal 12px/17px 'Liberation Sans', sans-serif;color:#f1f1f1;white-space:pre;letter-spacing:-0.086px;">Starter</div>
<svg style="left:179px;top:94px" width="14" height="15" viewBox="0 0 14 15"><path d="M4.5 7 V1.5 H10 M9.5 3 V5 M12.5 4 V11.5 H9 M4.5 8 V9" fill="none" stroke="#26262a" stroke-width="3" stroke-linecap="square"/>
<path d="M4.5 7 V1.5 H10 M9.5 3 V5 M12.5 4 V11.5 H9 M4.5 8 V9" fill="none" stroke="#c4c4c4" stroke-width="1"/>
<path d="M0 9.4 L2.8 7 L3.4 8.4 H7.4 V10.2 H3.4 L2.8 11.6 Z M3.4 10.2 H7.4 V12.2 L8 12.4 L5.6 14.6 L3.2 12.4 L3.8 12.2 Z" fill="#0a64d0"/>
<path d="M4.5 10.2 V12.5 H7.4" fill="none" stroke="#e0d8d0" stroke-width="0.9"/></svg>
<div style="position:absolute;left:199.30px;top:93.34px;font:normal 12px/17px 'Liberation Sans', sans-serif;color:#f1f1f1;white-space:pre;letter-spacing:0.050px;">CodeEditor</div>
<svg style="left:289px;top:94px" width="14" height="15" viewBox="0 0 14 15"><path d="M4.5 7 V1.5 H10 M9.5 3 V5 M12.5 4 V11.5 H9 M4.5 8 V9" fill="none" stroke="#26262a" stroke-width="3" stroke-linecap="square"/>
<path d="M4.5 7 V1.5 H10 M9.5 3 V5 M12.5 4 V11.5 H9 M4.5 8 V9" fill="none" stroke="#c4c4c4" stroke-width="1"/>
<path d="M0 9.4 L2.8 7 L3.4 8.4 H7.4 V10.2 H3.4 L2.8 11.6 Z M3.4 10.2 H7.4 V12.2 L8 12.4 L5.6 14.6 L3.2 12.4 L3.8 12.2 Z" fill="#0a64d0"/>
<path d="M4.5 10.2 V12.5 H7.4" fill="none" stroke="#e0d8d0" stroke-width="0.9"/></svg>
<div style="position:absolute;left:309.30px;top:93.34px;font:normal 12px/17px 'Liberation Sans', sans-serif;color:#f1f1f1;white-space:pre;letter-spacing:0.105px;">CodeMirrorWrapper</div>
<svg style="left:448px;top:95px" width="12" height="11" viewBox="0 0 12 11"><rect x="0.5" y="0.5" width="11" height="9.6" fill="none" stroke="#c8c8c8" stroke-width="1"/><path d="M0.5 2.6 H11.5" stroke="#c8c8c8" stroke-width="1"/><rect x="2.6" y="4.6" width="6.8" height="3.4" fill="none" stroke="#c8c8c8" stroke-width="0.9"/><path d="M4 6.3 H8" stroke="#c8c8c8" stroke-width="0.8"/></svg>
<div style="position:absolute;left:466.30px;top:93.34px;font:normal 12px/17px 'Liberation Sans', sans-serif;color:#f1f1f1;white-space:pre;letter-spacing:-0.062px;">CMW_Utils</div>
<svg style="left:555px;top:94px" width="14" height="15" viewBox="0 0 14 15"><path d="M4.5 7 V1.5 H10 M9.5 3 V5 M12.5 4 V11.5 H9 M4.5 8 V9" fill="none" stroke="#26262a" stroke-width="3" stroke-linecap="square"/>
<path d="M4.5 7 V1.5 H10 M9.5 3 V5 M12.5 4 V11.5 H9 M4.5 8 V9" fill="none" stroke="#c4c4c4" stroke-width="1"/>
<path d="M0 9.4 L2.8 7 L3.4 8.4 H7.4 V10.2 H3.4 L2.8 11.6 Z M3.4 10.2 H7.4 V12.2 L8 12.4 L5.6 14.6 L3.2 12.4 L3.8 12.2 Z" fill="#0a64d0"/>
<path d="M4.5 10.2 V12.5 H7.4" fill="none" stroke="#e0d8d0" stroke-width="0.9"/></svg>
<div style="position:absolute;left:575.30px;top:93.34px;font:normal 12px/17px 'Liberation Sans', sans-serif;color:#f1f1f1;white-space:pre;letter-spacing:-0.059px;">Throwables</div>
<svg style="left:666px;top:94px" width="14" height="15" viewBox="0 0 14 15"><path d="M4.5 7 V1.5 H10 M9.5 3 V5 M12.5 4 V11.5 H9 M4.5 8 V9" fill="none" stroke="#26262a" stroke-width="3" stroke-linecap="square"/>
<path d="M4.5 7 V1.5 H10 M9.5 3 V5 M12.5 4 V11.5 H9 M4.5 8 V9" fill="none" stroke="#c4c4c4" stroke-width="1"/>
<path d="M0 9.4 L2.8 7 L3.4 8.4 H7.4 V10.2 H3.4 L2.8 11.6 Z M3.4 10.2 H7.4 V12.2 L8 12.4 L5.6 14.6 L3.2 12.4 L3.8 12.2 Z" fill="#0a64d0"/>
<path d="M4.5 10.2 V12.5 H7.4" fill="none" stroke="#e0d8d0" stroke-width="0.9"/></svg>
<div style="position:absolute;left:686.30px;top:93.34px;font:normal 12px/17px 'Liberation Sans', sans-serif;color:#f1f1f1;white-space:pre;letter-spacing:0.105px;">NumberFormatException</div>
<svg style="left:851px;top:94px" width="14" height="15" viewBox="0 0 14 15"><path d="M4.5 7 V1.5 H10 M9.5 3 V5 M12.5 4 V11.5 H9 M4.5 8 V9" fill="none" stroke="#26262a" stroke-width="3" stroke-linecap="square"/>
<path d="M4.5 7 V1.5 H10 M9.5 3 V5 M12.5 4 V11.5 H9 M4.5 8 V9" fill="none" stroke="#c4c4c4" stroke-width="1"/>
<path d="M0 9.4 L2.8 7 L3.4 8.4 H7.4 V10.2 H3.4 L2.8 11.6 Z M3.4 10.2 H7.4 V12.2 L8 12.4 L5.6 14.6 L3.2 12.4 L3.8 12.2 Z" fill="#0a64d0"/>
<path d="M4.5 10.2 V12.5 H7.4" fill="none" stroke="#e0d8d0" stroke-width="0.9"/></svg>
<div style="position:absolute;left:871.30px;top:93.34px;font:normal 12px/17px 'Liberation Sans', sans-serif;color:#f1f1f1;white-space:pre;letter-spacing:0.095px;">IllegalArgumentExceptio</div>
<svg style="left:425px;top:96.5px" width="8" height="8" viewBox="0 0 8 8"><path d="M0.5 0.5 L7.5 7.5 M7.5 0.5 L0.5 7.5" stroke="#e8e8e8" stroke-width="1.3"/></svg>
<svg style="left:1008px;top:95.5px" width="4" height="8" viewBox="0 0 4 8"><path d="M4 0 V8 L0 4 Z" fill="#7a7a7e"/></svg>
<svg style="left:1024px;top:95.5px" width="4" height="8" viewBox="0 0 4 8"><path d="M0 0 V8 L4 4 Z" fill="#c8c8c8"/></svg>
<svg style="left:1038px;top:94.5px" width="8" height="8" viewBox="0 0 8 8"><path d="M0 0 H8 V1.6 H0 Z M0 3.6 H8 L4 8 Z" fill="#c8c8c8"/></svg>
<svg style="left:17px;top:117.5px" width="12" height="13" viewBox="0 0 12 13"><path d="M5.7 0 L11.4 3.1 V9.7 L5.7 12.8 L0 9.7 V3.1 Z" fill="#ffffff"/>
<path d="M5.7 1.7 L9.9 4 V8.8 L5.7 11.1 L1.5 8.8 V4 Z" fill="none" stroke="#7030b0" stroke-width="1.1"/>
<path d="M2.2 4.5 L5.7 6.5 L9.2 4.5 M5.7 6.5 V10.8" fill="none" stroke="#7030b0" stroke-width="1"/></svg>
<div style="position:absolute;left:35.30px;top:116.34px;font:normal 12px/17px 'Liberation Sans', sans-serif;color:#f1f1f1;white-space:pre;letter-spacing:0.276px;">MinifyHTML</div>
<svg style="left:977px;top:122px" width="6" height="3" viewBox="0 0 6 3"><path d="M0 0 H6 L3 3 Z" fill="#999999"/></svg>
<div style="position:absolute;left:992.30px;top:117.34px;font:normal 12px/17px 'Liberation Sans', sans-serif;color:#f1f1f1;white-space:pre;letter-spacing:-0.401px;">100%</div>
<svg style="left:1039.5px;top:122px" width="6" height="3" viewBox="0 0 6 3"><path d="M0 0 H6 L3 3 Z" fill="#999999"/></svg>
<svg style="left:1027.5px;top:149px" width="8" height="4" viewBox="0 0 8 4"><path d="M0 4 L4 0 L8 4 Z" fill="#999999"/></svg>
<svg style="left:1027.5px;top:1020px" width="8" height="4" viewBox="0 0 8 4"><path d="M0 0 L4 4 L8 0 Z" fill="#999999"/></svg>
<svg style="left:24.5px;top:1034px" width="4" height="8" viewBox="0 0 4 8"><path d="M4 0 V8 L0 4 Z" fill="#c0c0c0"/></svg>
<svg style="left:1013px;top:1034px" width="4" height="8" viewBox="0 0 4 8"><path d="M0 0 V8 L4 4 Z" fill="#c0c0c0"/></svg>
<div style="position:absolute;left:1028px;top:597px;width:7px;height:1px;background:#626266;"></div>
<div style="position:absolute;left:1028px;top:599px;width:7px;height:1px;background:#626266;"></div>
<div style="position:absolute;left:1028px;top:601px;width:7px;height:1px;background:#626266;"></div>
<div style="position:absolute;left:1028px;top:603px;width:7px;height:1px;background:#626266;"></div>
<div style="position:absolute;left:401px;top:1035px;width:1px;height:7px;background:#68686c;"></div>
<div style="position:absolute;left:403px;top:1035px;width:1px;height:7px;background:#68686c;"></div>
<div style="position:absolute;left:405px;top:1035px;width:1px;height:7px;background:#68686c;"></div>
<div style="position:absolute;left:407px;top:1035px;width:1px;height:7px;background:#68686c;"></div>
<div style="position:absolute;left:1056px;top:90px;width:621px;height:939px;background:#434346;"></div>
<div style="position:absolute;left:1057px;top:91px;width:619px;height:937px;background:#252526;"></div>
<div style="position:absolute;left:1062px;top:1031px;width:1px;height:13px;background:#e8e8e8;"></div>
<div style="position:absolute;left:1062px;top:1031px;width:2px;height:1px;background:#e8e8e8;"></div>
<div style="position:absolute;left:1062px;top:1043px;width:2px;height:1px;background:#e8e8e8;"></div>
<div style="position:absolute;left:1057px;top:91px;width:619px;height:22px;background:#2d2d30;"></div>
<div style="position:absolute;left:1061.80px;top:94.34px;font:normal 12px/17px 'Liberation Sans', sans-serif;color:#f1f1f1;white-space:pre;letter-spacing:-0.010px;">Logs</div>
<svg style="left:1096px;top:100px" width="526" height="5"><defs><pattern id="gd" width="4" height="4" patternUnits="userSpaceOnUse"><rect x="0" y="0" width="1" height="1" fill="#707074"/><rect x="2" y="2" width="1" height="1" fill="#707074"/></pattern></defs><rect width="526" height="5" fill="url(#gd)"/></svg>
<svg style="left:1630px;top:102.5px" width="8" height="4" viewBox="0 0 8 4"><path d="M0 0 H8 L4 4 Z" fill="#c8c8c8"/></svg>
<svg style="left:1645px;top:97px" width="8" height="10" viewBox="0 0 8 10"><g fill="#d8d8d8" shape-rendering="crispEdges"><rect x="2" y="0" width="5" height="1"/><rect x="2" y="0" width="1" height="6"/><rect x="5" y="0" width="2" height="6"/><rect x="0" y="6" width="9" height="1"/><rect x="4" y="7" width="1" height="3"/></g></svg>
<svg style="left:1662px;top:98px" width="9" height="9" viewBox="0 0 9 9"><path d="M0.5 0.5 L8 8 M8 0.5 L0.5 8" stroke="#d8d8d8" stroke-width="1.3"/></svg>
<div style="position:absolute;left:1062px;top:118px;width:607px;height:93px;border:1px solid #434346;background:#252526"></div>
<div style="position:absolute;left:1067.80px;top:122.34px;font:normal 12px/17px 'Liberation Sans', sans-serif;color:#e8b820;white-space:pre;letter-spacing:-0.070px;">Alla variabile 'Timer1' non è stato mai assegnato alcun valore.</div>
<div style="position:absolute;left:1393.30px;top:122.34px;font:italic normal 12px/17px 'Liberation Sans', sans-serif;color:#e8b820;white-space:pre;letter-spacing:0.135px;">(warning #10)</div>
<div style="position:absolute;left:1057px;top:213px;width:619px;height:4px;background:#1b1b1c;"></div>
<div style="position:absolute;left:1062px;top:218px;width:607px;height:600px;border:1px solid #434346;border-bottom:none;background:#252526"></div>
<div style="position:absolute;left:1066.80px;top:220.94px;font:normal 12px/17px 'Liberation Sans', sans-serif;color:#8a8a8a;white-space:pre;letter-spacing:-0.142px;">*** Service (starter) Create ***</div>
<div style="position:absolute;left:1066.80px;top:237.94px;font:normal 12px/17px 'Liberation Sans', sans-serif;color:#8a8a8a;white-space:pre;letter-spacing:-0.156px;">** Service (starter) Start **</div>
<div style="position:absolute;left:1066.80px;top:254.94px;font:normal 12px/17px 'Liberation Sans', sans-serif;color:#8a8a8a;white-space:pre;letter-spacing:0.099px;">** Activity (main) Create (first time) **</div>
<div style="position:absolute;left:1066.80px;top:271.94px;font:normal 12px/17px 'Liberation Sans', sans-serif;color:#8a8a8a;white-space:pre;letter-spacing:0.072px;">** Activity (main) Resume **</div>
<svg style="left:1068px;top:292px" width="15" height="10" viewBox="0 0 15 10"><rect x="0.7" y="0.7" width="13.6" height="8.6" fill="#333336" stroke="#f4f4f4" stroke-width="1.4"/><path d="M3 5 H10 M7.4 2.4 L10.6 5 L7.4 7.6" fill="none" stroke="#ffffff" stroke-width="1.7"/></svg>
<svg style="left:1068px;top:310px" width="15" height="10" viewBox="0 0 15 10"><rect x="0.7" y="0.7" width="13.6" height="8.6" fill="#333336" stroke="#f4f4f4" stroke-width="1.4"/><path d="M3 5 H10 M7.4 2.4 L10.6 5 L7.4 7.6" fill="none" stroke="#ffffff" stroke-width="1.7"/></svg>
<div style="position:absolute;left:1087.80px;top:306.94px;font:normal 12px/17px 'Liberation Sans', sans-serif;color:#f1f1f1;white-space:pre;letter-spacing:-0.286px;">INITIALIZE CodeEditor</div>
<svg style="left:1068px;top:328px" width="15" height="10" viewBox="0 0 15 10"><rect x="0.7" y="0.7" width="13.6" height="8.6" fill="#333336" stroke="#f4f4f4" stroke-width="1.4"/><path d="M3 5 H10 M7.4 2.4 L10.6 5 L7.4 7.6" fill="none" stroke="#ffffff" stroke-width="1.7"/></svg>
<div style="position:absolute;left:1087.80px;top:324.94px;font:normal 12px/17px 'Liberation Sans', sans-serif;color:#f1f1f1;white-space:pre;letter-spacing:0.031px;">Loading code editor layout ...</div>
<svg style="left:1068px;top:346px" width="15" height="10" viewBox="0 0 15 10"><rect x="0.7" y="0.7" width="13.6" height="8.6" fill="#333336" stroke="#f4f4f4" stroke-width="1.4"/><path d="M3 5 H10 M7.4 2.4 L10.6 5 L7.4 7.6" fill="none" stroke="#ffffff" stroke-width="1.7"/></svg>
<svg style="left:1068px;top:364px" width="15" height="10" viewBox="0 0 15 10"><rect x="0.7" y="0.7" width="13.6" height="8.6" fill="#333336" stroke="#f4f4f4" stroke-width="1.4"/><path d="M3 5 H10 M7.4 2.4 L10.6 5 L7.4 7.6" fill="none" stroke="#ffffff" stroke-width="1.7"/></svg>
<div style="position:absolute;left:1087.80px;top:360.94px;font:normal 12px/17px 'Liberation Sans', sans-serif;color:#f1f1f1;white-space:pre;letter-spacing:-0.167px;">INITIALIZE CodeMirrorWrapper</div>
<svg style="left:1068px;top:382px" width="15" height="10" viewBox="0 0 15 10"><rect x="0.7" y="0.7" width="13.6" height="8.6" fill="#333336" stroke="#f4f4f4" stroke-width="1.4"/><path d="M3 5 H10 M7.4 2.4 L10.6 5 L7.4 7.6" fill="none" stroke="#ffffff" stroke-width="1.7"/></svg>
<div style="position:absolute;left:1087.80px;top:378.94px;font:normal 12px/17px 'Liberation Sans', sans-serif;color:#f1f1f1;white-space:pre;letter-spacing:-0.096px;">WebView DOM storage: true</div>
<svg style="left:1068px;top:400px" width="15" height="10" viewBox="0 0 15 10"><rect x="0.7" y="0.7" width="13.6" height="8.6" fill="#333336" stroke="#f4f4f4" stroke-width="1.4"/><path d="M3 5 H10 M7.4 2.4 L10.6 5 L7.4 7.6" fill="none" stroke="#ffffff" stroke-width="1.7"/></svg>
<div style="position:absolute;left:1087.80px;top:396.94px;font:normal 12px/17px 'Liberation Sans', sans-serif;color:#f1f1f1;white-space:pre;letter-spacing:-0.165px;">WebView file access: true</div>
<svg style="left:1068px;top:418px" width="15" height="10" viewBox="0 0 15 10"><rect x="0.7" y="0.7" width="13.6" height="8.6" fill="#333336" stroke="#f4f4f4" stroke-width="1.4"/><path d="M3 5 H10 M7.4 2.4 L10.6 5 L7.4 7.6" fill="none" stroke="#ffffff" stroke-width="1.7"/></svg>
<div style="position:absolute;left:1087.80px;top:414.94px;font:normal 12px/17px 'Liberation Sans', sans-serif;color:#f1f1f1;white-space:pre;letter-spacing:-0.111px;">WebView content access: true</div>
<svg style="left:1068px;top:436px" width="15" height="10" viewBox="0 0 15 10"><rect x="0.7" y="0.7" width="13.6" height="8.6" fill="#333336" stroke="#f4f4f4" stroke-width="1.4"/><path d="M3 5 H10 M7.4 2.4 L10.6 5 L7.4 7.6" fill="none" stroke="#ffffff" stroke-width="1.7"/></svg>
<div style="position:absolute;left:1087.80px;top:432.94px;font:normal 12px/17px 'Liberation Sans', sans-serif;color:#f1f1f1;white-space:pre;letter-spacing:0.042px;">FilesFolder: /data/user/0/b4a.example.codemirror/files</div>
<svg style="left:1068px;top:454px" width="15" height="10" viewBox="0 0 15 10"><rect x="0.7" y="0.7" width="13.6" height="8.6" fill="#333336" stroke="#f4f4f4" stroke-width="1.4"/><path d="M3 5 H10 M7.4 2.4 L10.6 5 L7.4 7.6" fill="none" stroke="#ffffff" stroke-width="1.7"/></svg>
<div style="position:absolute;left:1087.80px;top:450.94px;font:normal 12px/17px 'Liberation Sans', sans-serif;color:#f1f1f1;white-space:pre;letter-spacing:-0.351px;">INITIALIZE CMW_Utils</div>
<svg style="left:1068px;top:472px" width="15" height="10" viewBox="0 0 15 10"><rect x="0.7" y="0.7" width="13.6" height="8.6" fill="#333336" stroke="#f4f4f4" stroke-width="1.4"/><path d="M3 5 H10 M7.4 2.4 L10.6 5 L7.4 7.6" fill="none" stroke="#ffffff" stroke-width="1.7"/></svg>
<div style="position:absolute;left:1087.80px;top:468.94px;font:normal 12px/17px 'Liberation Sans', sans-serif;color:#f1f1f1;white-space:pre;letter-spacing:0.025px;">CodeMirror distribution already exists</div>
<svg style="left:1068px;top:490px" width="15" height="10" viewBox="0 0 15 10"><rect x="0.7" y="0.7" width="13.6" height="8.6" fill="#333336" stroke="#f4f4f4" stroke-width="1.4"/><path d="M3 5 H10 M7.4 2.4 L10.6 5 L7.4 7.6" fill="none" stroke="#ffffff" stroke-width="1.7"/></svg>
<div style="position:absolute;left:1087.80px;top:486.94px;font:normal 12px/17px 'Liberation Sans', sans-serif;color:#f1f1f1;white-space:pre;letter-spacing:-0.141px;">wrapper.js already exists</div>
<svg style="left:1068px;top:508px" width="15" height="10" viewBox="0 0 15 10"><rect x="0.7" y="0.7" width="13.6" height="8.6" fill="#333336" stroke="#f4f4f4" stroke-width="1.4"/><path d="M3 5 H10 M7.4 2.4 L10.6 5 L7.4 7.6" fill="none" stroke="#ffffff" stroke-width="1.7"/></svg>
<div style="position:absolute;left:1087.80px;top:504.94px;font:normal 12px/17px 'Liberation Sans', sans-serif;color:#f1f1f1;white-space:pre;letter-spacing:-0.189px;">wrapper.css already exists</div>
<svg style="left:1068px;top:526px" width="15" height="10" viewBox="0 0 15 10"><rect x="0.7" y="0.7" width="13.6" height="8.6" fill="#333336" stroke="#f4f4f4" stroke-width="1.4"/><path d="M3 5 H10 M7.4 2.4 L10.6 5 L7.4 7.6" fill="none" stroke="#ffffff" stroke-width="1.7"/></svg>
<div style="position:absolute;left:1087.80px;top:522.94px;font:normal 12px/17px 'Liberation Sans', sans-serif;color:#f1f1f1;white-space:pre;letter-spacing:0.022px;">Codemirror path: codemirror-5.65.16</div>
<svg style="left:1068px;top:544px" width="15" height="10" viewBox="0 0 15 10"><rect x="0.7" y="0.7" width="13.6" height="8.6" fill="#333336" stroke="#f4f4f4" stroke-width="1.4"/><path d="M3 5 H10 M7.4 2.4 L10.6 5 L7.4 7.6" fill="none" stroke="#ffffff" stroke-width="1.7"/></svg>
<div style="position:absolute;left:1087.80px;top:540.94px;font:normal 12px/17px 'Liberation Sans', sans-serif;color:#f1f1f1;white-space:pre;letter-spacing:-0.041px;">Creating HTML string ...</div>
<svg style="left:1068px;top:562px" width="15" height="10" viewBox="0 0 15 10"><rect x="0.7" y="0.7" width="13.6" height="8.6" fill="#333336" stroke="#f4f4f4" stroke-width="1.4"/><path d="M3 5 H10 M7.4 2.4 L10.6 5 L7.4 7.6" fill="none" stroke="#ffffff" stroke-width="1.7"/></svg>
<div style="position:absolute;left:1087.80px;top:558.94px;font:normal 12px/17px 'Liberation Sans', sans-serif;color:#f1f1f1;white-space:pre;letter-spacing:-0.231px;">USE [HTML] LINT (Error checking)</div>
<svg style="left:1068px;top:580px" width="15" height="10" viewBox="0 0 15 10"><rect x="0.7" y="0.7" width="13.6" height="8.6" fill="#333336" stroke="#f4f4f4" stroke-width="1.4"/><path d="M3 5 H10 M7.4 2.4 L10.6 5 L7.4 7.6" fill="none" stroke="#ffffff" stroke-width="1.7"/></svg>
<div style="position:absolute;left:1087.80px;top:576.94px;font:normal 12px/17px 'Liberation Sans', sans-serif;color:#f1f1f1;white-space:pre;letter-spacing:0.030px;">File /data/user/0/b4a.example.codemirror/files/HTMLHint.js already exists.</div>
<svg style="left:1068px;top:598px" width="15" height="10" viewBox="0 0 15 10"><rect x="0.7" y="0.7" width="13.6" height="8.6" fill="#333336" stroke="#f4f4f4" stroke-width="1.4"/><path d="M3 5 H10 M7.4 2.4 L10.6 5 L7.4 7.6" fill="none" stroke="#ffffff" stroke-width="1.7"/></svg>
<div style="position:absolute;left:1087.80px;top:594.94px;font:normal 12px/17px 'Liberation Sans', sans-serif;color:#f1f1f1;white-space:pre;letter-spacing:-0.256px;">HTML File Size after remove: 0 Bytes</div>
<svg style="left:1068px;top:616px" width="15" height="10" viewBox="0 0 15 10"><rect x="0.7" y="0.7" width="13.6" height="8.6" fill="#333336" stroke="#f4f4f4" stroke-width="1.4"/><path d="M3 5 H10 M7.4 2.4 L10.6 5 L7.4 7.6" fill="none" stroke="#ffffff" stroke-width="1.7"/></svg>
<div style="position:absolute;left:1087.80px;top:612.94px;font:normal 12px/17px 'Liberation Sans', sans-serif;color:#f1f1f1;white-space:pre;letter-spacing:-0.005px;">Edit HTML Template required 11 milliseconds to complete</div>
<svg style="left:1068px;top:634px" width="15" height="10" viewBox="0 0 15 10"><rect x="0.7" y="0.7" width="13.6" height="8.6" fill="#333336" stroke="#f4f4f4" stroke-width="1.4"/><path d="M3 5 H10 M7.4 2.4 L10.6 5 L7.4 7.6" fill="none" stroke="#ffffff" stroke-width="1.7"/></svg>
<div style="position:absolute;left:1087.80px;top:630.94px;font:normal 12px/17px 'Liberation Sans', sans-serif;color:#10e010;white-space:pre;letter-spacing:-0.474px;">MINIFIED MULTILINE:</div>
<div style="position:absolute;left:1066.80px;top:648.94px;font:normal 12px/17px 'Liberation Sans', sans-serif;color:#f1f1f1;white-space:pre;letter-spacing:0.377px;">[0001]    [\s+]</div>
<svg style="left:1068px;top:669px" width="15" height="10" viewBox="0 0 15 10"><rect x="0.7" y="0.7" width="13.6" height="8.6" fill="#333336" stroke="#f4f4f4" stroke-width="1.4"/><path d="M3 5 H10 M7.4 2.4 L10.6 5 L7.4 7.6" fill="none" stroke="#ffffff" stroke-width="1.7"/></svg>
<svg style="left:1068px;top:687px" width="15" height="10" viewBox="0 0 15 10"><rect x="0.7" y="0.7" width="13.6" height="8.6" fill="#333336" stroke="#f4f4f4" stroke-width="1.4"/><path d="M3 5 H10 M7.4 2.4 L10.6 5 L7.4 7.6" fill="none" stroke="#ffffff" stroke-width="1.7"/></svg>
<div style="position:absolute;left:1087.80px;top:683.94px;font:normal 12px/17px 'Liberation Sans', sans-serif;color:#f1f1f1;white-space:pre;letter-spacing:-0.165px;">Message length: 3 characters in 1 lines.</div>
<svg style="left:1068px;top:705px" width="15" height="10" viewBox="0 0 15 10"><rect x="0.7" y="0.7" width="13.6" height="8.6" fill="#333336" stroke="#f4f4f4" stroke-width="1.4"/><path d="M3 5 H10 M7.4 2.4 L10.6 5 L7.4 7.6" fill="none" stroke="#ffffff" stroke-width="1.7"/></svg>
<div style="position:absolute;left:1087.80px;top:701.94px;font:normal 12px/17px 'Liberation Sans', sans-serif;color:#e6e600;white-space:pre;letter-spacing:0.828px;">\s+</div>
<svg style="left:1068px;top:723px" width="15" height="10" viewBox="0 0 15 10"><rect x="0.7" y="0.7" width="13.6" height="8.6" fill="#333336" stroke="#f4f4f4" stroke-width="1.4"/><path d="M3 5 H10 M7.4 2.4 L10.6 5 L7.4 7.6" fill="none" stroke="#ffffff" stroke-width="1.7"/></svg>
<div style="position:absolute;left:1087.80px;top:719.94px;font:normal 12px/17px 'Liberation Sans', sans-serif;color:#f01414;white-space:pre;letter-spacing:-0.435px;">NO MINIFIED Size: 11300 Bytes</div>
<svg style="left:1068px;top:741px" width="15" height="10" viewBox="0 0 15 10"><rect x="0.7" y="0.7" width="13.6" height="8.6" fill="#333336" stroke="#f4f4f4" stroke-width="1.4"/><path d="M3 5 H10 M7.4 2.4 L10.6 5 L7.4 7.6" fill="none" stroke="#ffffff" stroke-width="1.7"/></svg>
<div style="position:absolute;left:1087.80px;top:737.94px;font:normal 12px/17px 'Liberation Sans', sans-serif;color:#f01414;white-space:pre;letter-spacing:-0.459px;">MINIFIED Size: 3 Bytes</div>
<svg style="left:1068px;top:759px" width="15" height="10" viewBox="0 0 15 10"><rect x="0.7" y="0.7" width="13.6" height="8.6" fill="#333336" stroke="#f4f4f4" stroke-width="1.4"/><path d="M3 5 H10 M7.4 2.4 L10.6 5 L7.4 7.6" fill="none" stroke="#ffffff" stroke-width="1.7"/></svg>
<div style="position:absolute;left:1087.80px;top:755.94px;font:normal 12px/17px 'Liberation Sans', sans-serif;color:#10e010;white-space:pre;letter-spacing:-0.218px;">Size decreased by a factor of 99.97 percent</div>
<svg style="left:1068px;top:777px" width="15" height="10" viewBox="0 0 15 10"><rect x="0.7" y="0.7" width="13.6" height="8.6" fill="#333336" stroke="#f4f4f4" stroke-width="1.4"/><path d="M3 5 H10 M7.4 2.4 L10.6 5 L7.4 7.6" fill="none" stroke="#ffffff" stroke-width="1.7"/></svg>
<div style="position:absolute;left:1087.80px;top:773.94px;font:normal 12px/17px 'Liberation Sans', sans-serif;color:#10e010;white-space:pre;letter-spacing:-0.463px;">FINAL MINIFIED ONE LINE:</div>
<svg style="left:1068px;top:795px" width="15" height="10" viewBox="0 0 15 10"><rect x="0.7" y="0.7" width="13.6" height="8.6" fill="#333336" stroke="#f4f4f4" stroke-width="1.4"/><path d="M3 5 H10 M7.4 2.4 L10.6 5 L7.4 7.6" fill="none" stroke="#ffffff" stroke-width="1.7"/></svg>
<div style="position:absolute;left:1087.80px;top:791.94px;font:normal 12px/17px 'Liberation Sans', sans-serif;color:#e6e600;white-space:pre;letter-spacing:0.828px;">\s+</div>
<div style="position:absolute;left:1064px;top:811px;width:621px;height:277px;background:#434346;"></div>
<div style="position:absolute;left:1065px;top:812px;width:620px;height:276px;background:#252526;"></div>
<div style="position:absolute;left:1065px;top:812px;width:620px;height:33px;background:#2d2d30;"></div>
<svg style="left:1073px;top:822.5px" width="9.6" height="9.6" viewBox="0 0 10 10"><path d="M0 10 L3.9 0 L6.1 0 L10 10 L7.9 10 L7.1 7.7 L2.9 7.7 L2.1 10 Z M3.5 6 L6.5 6 L5 1.9 Z" fill="#12dcd0" fill-rule="evenodd"/></svg>
<div style="position:absolute;left:1090.80px;top:820.34px;font:normal 12px/17px 'Liberation Sans', sans-serif;color:#999999;white-space:pre;letter-spacing:0.012px;">Compila (Build: Default)</div>
<svg style="left:1671.5px;top:822px" width="11" height="11" viewBox="0 0 11 11"><path d="M0.5 0.5 L10.5 10.5 M10.5 0.5 L0.5 10.5" stroke="#f1f1f1" stroke-width="1.1"/></svg>
<div style="position:absolute;left:1077px;top:857px;width:610px;height:20.5px;background:#4a4048;"></div>
<div style="position:absolute;left:1078px;top:858px;width:610px;height:18.5px;background:#00d42b;"></div>
<div style="position:absolute;left:1077px;top:887px;width:620px;height:220px;border:1px solid #434346;background:#252526"></div>
<div style="position:absolute;left:1081.70px;top:890.34px;font:normal 12px/17px 'Liberation Sans', sans-serif;color:#f1f1f1;white-space:pre;letter-spacing:-0.369px;">B4A Versione: 12.80</div>
<div style="position:absolute;left:1081.70px;top:905.34px;font:normal 12px/17px 'Liberation Sans', sans-serif;color:#f1f1f1;white-space:pre;letter-spacing:-0.045px;">Analisi del Codice.</div>
<div style="position:absolute;left:1191.40px;top:905.34px;font:normal 12px/17px 'Liberation Sans', sans-serif;color:#f1f1f1;white-space:pre;letter-spacing:-0.493px;">(0.05s)</div>
<div style="position:absolute;left:1129.30px;top:920.34px;font:normal 12px/17px 'Liberation Sans', sans-serif;color:#f1f1f1;white-space:pre;letter-spacing:-0.438px;">Java Versione: 11</div>
<div style="position:absolute;left:1081.70px;top:935.34px;font:normal 12px/17px 'Liberation Sans', sans-serif;color:#f1f1f1;white-space:pre;letter-spacing:0.046px;">Building folders structure.</div>
<div style="position:absolute;left:1230.10px;top:935.34px;font:normal 12px/17px 'Liberation Sans', sans-serif;color:#f1f1f1;white-space:pre;letter-spacing:-0.510px;">(0.03s)</div>
<div style="position:absolute;left:1081.70px;top:950.34px;font:normal 12px/17px 'Liberation Sans', sans-serif;color:#f1f1f1;white-space:pre;letter-spacing:0.008px;">Compilazione del codice.</div>
<div style="position:absolute;left:1227.10px;top:950.34px;font:normal 12px/17px 'Liberation Sans', sans-serif;color:#f1f1f1;white-space:pre;letter-spacing:-0.510px;">(0.05s)</div>
<div style="position:absolute;left:1081.70px;top:965.34px;font:normal 12px/17px 'Liberation Sans', sans-serif;color:#f1f1f1;white-space:pre;letter-spacing:0.015px;">Compilazione del codice di layouts</div>
<div style="position:absolute;left:1278.10px;top:965.34px;font:normal 12px/17px 'Liberation Sans', sans-serif;color:#f1f1f1;white-space:pre;letter-spacing:-0.527px;">(0.00s)</div>
<div style="position:absolute;left:1081.70px;top:980.34px;font:normal 12px/17px 'Liberation Sans', sans-serif;color:#f1f1f1;white-space:pre;letter-spacing:-0.195px;">Organizzazione Librerie.</div>
<div style="position:absolute;left:1219.10px;top:980.34px;font:normal 12px/17px 'Liberation Sans', sans-serif;color:#f1f1f1;white-space:pre;letter-spacing:-0.493px;">(0.00s)</div>
<div style="position:absolute;left:1129.30px;top:995.34px;font:normal 12px/17px 'Liberation Sans', sans-serif;color:#f1f1f1;white-space:pre;letter-spacing:-0.175px;">(AndroidX SDK)</div>
<div style="position:absolute;left:1081.70px;top:1010.34px;font:normal 12px/17px 'Liberation Sans', sans-serif;color:#f1f1f1;white-space:pre;letter-spacing:-0.076px;">Compilazione risorse</div>
<div style="position:absolute;left:1204.10px;top:1010.34px;font:normal 12px/17px 'Liberation Sans', sans-serif;color:#f1f1f1;white-space:pre;letter-spacing:-0.510px;">(0.07s)</div>
<div style="position:absolute;left:1081.70px;top:1025.34px;font:normal 12px/17px 'Liberation Sans', sans-serif;color:#f1f1f1;white-space:pre;letter-spacing:-0.021px;">Collegamento risorse</div>
<div style="position:absolute;left:1206.50px;top:1025.34px;font:normal 12px/17px 'Liberation Sans', sans-serif;color:#f1f1f1;white-space:pre;letter-spacing:-0.593px;">(0.62s)</div>
<div style="position:absolute;left:1081.70px;top:1040.34px;font:normal 12px/17px 'Liberation Sans', sans-serif;color:#f1f1f1;white-space:pre;letter-spacing:-0.023px;">Compilazione del codice Java prodotto.</div>
<div style="position:absolute;left:1302.10px;top:1040.34px;font:normal 12px/17px 'Liberation Sans', sans-serif;color:#f1f1f1;white-space:pre;letter-spacing:-0.510px;">(1.88s)</div>
<div style="position:absolute;left:1081.70px;top:1055.34px;font:normal 12px/17px 'Liberation Sans', sans-serif;color:#f1f1f1;white-space:pre;letter-spacing:-0.188px;">Ricerca librerie che necessitano di essere "dexed".</div>
<div style="position:absolute;left:1354.10px;top:1055.34px;font:normal 12px/17px 'Liberation Sans', sans-serif;color:#f1f1f1;white-space:pre;letter-spacing:-0.510px;">(0.00s)</div>
<div style="position:absolute;left:1081.70px;top:1070.34px;font:normal 12px/17px 'Liberation Sans', sans-serif;color:#f1f1f1;white-space:pre;letter-spacing:-0.158px;">Dex code</div>
<div style="position:absolute;left:1143.10px;top:1070.34px;font:normal 12px/17px 'Liberation Sans', sans-serif;color:#f1f1f1;white-space:pre;letter-spacing:-0.510px;">(2.63s)</div>
<div style="position:absolute;left:1683px;top:0px;width:2px;height:1088px;background:#ff0000;"></div>
<div style="position:absolute;left:0px;top:1086px;width:1685px;height:2px;background:#ff0000;"></div>
</body></html>
